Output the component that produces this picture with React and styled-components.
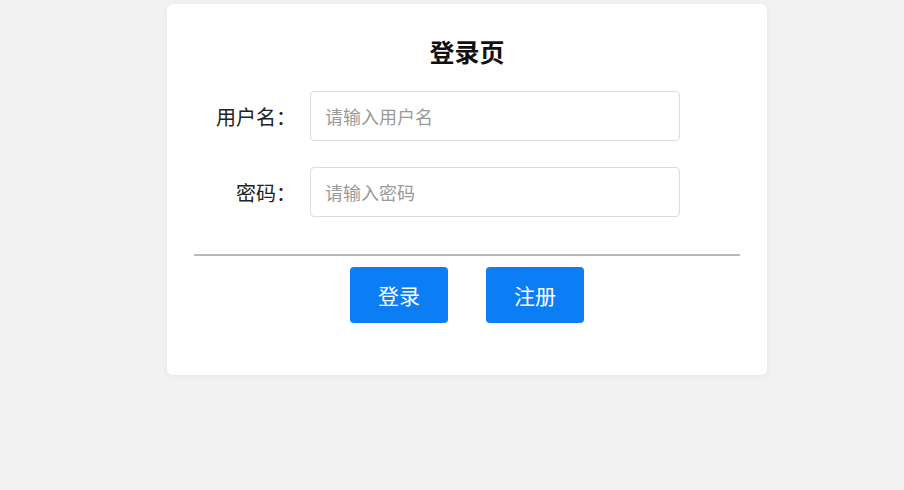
import React from 'react'
import styled, { createGlobalStyle } from 'styled-components'

const GlobalStyle = createGlobalStyle`
  html, body {
    margin: 0;
    padding: 0;
    background: #f2f2f2;
    font-family: "Noto Sans CJK SC", "Noto Sans", sans-serif;
  }
`

const Page = styled.div`
  min-height: 490px;
  padding-top: 4px;
  box-sizing: border-box;
`

const Card = styled.div`
  width: 600px;
  margin-left: 167px;
  box-sizing: border-box;
  padding: 32px 27px 52px;
  background: #fff;
  border-radius: 6px;
  box-shadow: 0 1px 6px rgba(0, 0, 0, 0.06);
`

const Title = styled.h2`
  margin: 0;
  font-size: 25px;
  line-height: 30px;
  font-weight: bold;
  color: #111;
  text-align: center;
`

const Form = styled.div`
  display: grid;
  grid-template-columns: 98px 370px;
  column-gap: 18px;
  row-gap: 26px;
  align-items: center;
  margin-top: 25px;
`

const Label = styled.label`
  font-size: 20px;
  color: #222;
  text-align: right;
  white-space: nowrap;
  margin-right: -4px;
`

const Input = styled.input`
  height: 50px;
  box-sizing: border-box;
  border: 1px solid #dcdcdc;
  border-radius: 4px;
  padding: 0 14px;
  font-family: inherit;
  font-size: 18px;
  color: #333;
  outline: none;

  &::placeholder {
    color: #9a9a9a;
  }
`

const Divider = styled.hr`
  margin: 37px 0 0;
  border: none;
  height: 2px;
  background: #b9b9b9;
`

const Actions = styled.div`
  display: flex;
  justify-content: center;
  gap: 38px;
  margin-top: 11px;
`

const Button = styled.button`
  width: 98px;
  height: 56px;
  border: none;
  border-radius: 4px;
  background: #0b7ef6;
  color: #fff;
  font-family: inherit;
  font-size: 21px;
  cursor: pointer;
`

export default function App () {
  return (
    <>
      <GlobalStyle />
      <Page>
        <Card>
          <Title>登录页</Title>
          <Form>
            <Label htmlFor='username'>用户名：</Label>
            <Input id='username' placeholder='请输入用户名' />
            <Label htmlFor='password'>密码：</Label>
            <Input id='password' type='password' placeholder='请输入密码' />
          </Form>
          <Divider />
          <Actions>
            <Button>登录</Button>
            <Button>注册</Button>
          </Actions>
        </Card>
      </Page>
    </>
  )
}
